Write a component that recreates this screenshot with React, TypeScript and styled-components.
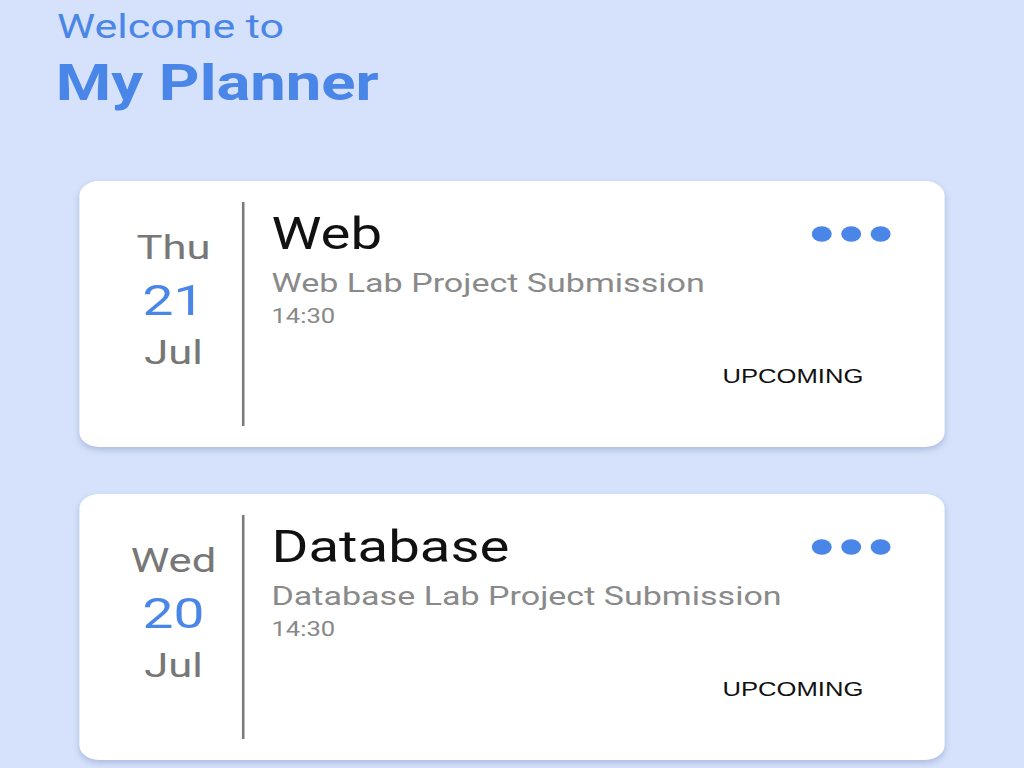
import styled, { createGlobalStyle } from "styled-components";

const GlobalStyle = createGlobalStyle`
  html, body {
    margin: 0;
    padding: 0;
    background: #d6e2fb;
    overflow: hidden;
  }
  body {
    font-family: Roboto, "Noto Sans", sans-serif;
  }
`;

// the source is a phone screen stretched wide, so the page is drawn
// narrow and widened as one piece
const Stage = styled.div`
  width: 800px;
  min-height: 768px;
  transform: scaleX(1.28);
  transform-origin: 0 0;
`;

const Header = styled.header`
  padding: 7px 0 0 44.5px;
  margin-bottom: 69px;
  color: #4a86e8;
`;

const Welcome = styled.div`
  font-size: 33.6px;
  line-height: 40px;
`;

const AppName = styled.h1`
  margin: 7px 0 0 -1px;
  font-size: 49.5px;
  line-height: 58px;
  font-weight: 700;
`;

const List = styled.div`
  display: flex;
  flex-direction: column;
  gap: 47px;
  padding: 0 62px;
`;

const Card = styled.div`
  display: flex;
  height: 266px;
  box-sizing: border-box;
  padding: 21px 0;
  background: #fff;
  border-radius: 15px;
  box-shadow: 0 3px 6px rgba(70, 90, 150, 0.28);
`;

const DateCol = styled.div`
  width: 107px;
  margin-left: 20px;
  padding-top: 23.4px;
  display: flex;
  flex-direction: column;
  align-items: center;
`;

const DateText = styled.div<{ $size: number; $lh: number; $accent?: boolean }>`
  font-size: ${(p) => p.$size}px;
  line-height: ${(p) => p.$lh}px;
  color: ${(p) => (p.$accent ? "#4a86e8" : "#777")};
`;

const Divider = styled.div`
  width: 1.6px;
  background: #7a7a7a;
`;

const Content = styled.div`
  flex: 1;
  display: flex;
  flex-direction: column;
  padding: 6px 42px 0 21.5px;
`;

const TitleRow = styled.div`
  display: flex;
  align-items: center;
  justify-content: space-between;
`;

const Title = styled.div`
  font-size: 44px;
  line-height: 52px;
  color: #111;
`;

const Subtitle = styled.div`
  margin-top: 7px;
  font-size: 26.6px;
  line-height: 32px;
  color: #8a8a8a;
  white-space: nowrap;
`;

const Time = styled.div`
  margin-top: 5px;
  font-size: 20px;
  line-height: 24px;
  color: #888;
`;

const Status = styled.div`
  align-self: flex-end;
  margin: 36px 21.5px 0 0;
  font-family: "Liberation Sans", Arial, sans-serif;
  font-size: 20px;
  line-height: 24px;
  color: #111;
`;

const MoreDots = () => (
  <svg width="62" height="16" viewBox="0 0 62 16">
    <circle cx="8" cy="8" r="7.8" fill="#4a86e8" />
    <circle cx="31" cy="8" r="7.8" fill="#4a86e8" />
    <circle cx="54" cy="8" r="7.8" fill="#4a86e8" />
  </svg>
);

type Task = {
  day: string;
  date: string;
  month: string;
  title: string;
  desc: string;
  time: string;
  status: string;
};

const tasks: Task[] = [
  {
    day: "Thu",
    date: "21",
    month: "Jul",
    title: "Web",
    desc: "Web Lab Project Submission",
    time: "14:30",
    status: "UPCOMING",
  },
  {
    day: "Wed",
    date: "20",
    month: "Jul",
    title: "Database",
    desc: "Database Lab Project Submission",
    time: "14:30",
    status: "UPCOMING",
  },
];

const TaskCard = ({ task }: { task: Task }) => (
  <Card>
    <DateCol>
      <DateText $size={34} $lh={44}>{task.day}</DateText>
      <DateText $size={43} $lh={62} $accent>
        {task.date}
      </DateText>
      <DateText $size={34} $lh={42}>{task.month}</DateText>
    </DateCol>
    <Divider />
    <Content>
      <TitleRow>
        <Title>{task.title}</Title>
        <MoreDots />
      </TitleRow>
      <Subtitle>{task.desc}</Subtitle>
      <Time>{task.time}</Time>
      <Status>{task.status}</Status>
    </Content>
  </Card>
);

export default function App() {
  return (
    <>
      <GlobalStyle />
      <Stage>
        <Header>
          <Welcome>Welcome to</Welcome>
          <AppName>My Planner</AppName>
        </Header>
        <List>
          {tasks.map((t) => (
            <TaskCard key={t.title} task={t} />
          ))}
        </List>
      </Stage>
    </>
  );
}
